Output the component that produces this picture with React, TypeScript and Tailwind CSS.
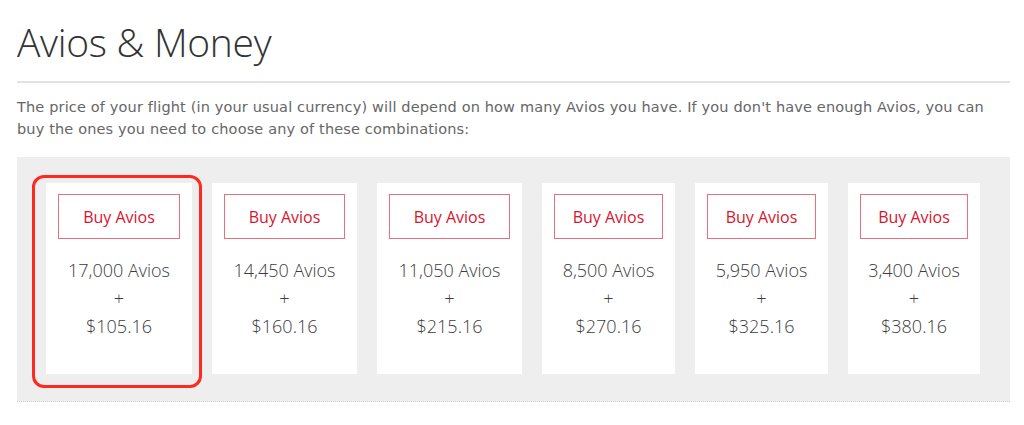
import React from "react";

const options = [
  { avios: "17,000", money: "$105.16", w: "w-[146px]", hl: true },
  { avios: "14,450", money: "$160.16", w: "w-[145px]" },
  { avios: "11,050", money: "$215.16", w: "w-[145px]" },
  { avios: "8,500", money: "$270.16", w: "w-[133px]" },
  { avios: "5,950", money: "$325.16", w: "w-[133px]" },
  { avios: "3,400", money: "$380.16", w: "w-[132px]" },
];

export default function App() {
  return (
    <div className="w-[1024px] h-[425px] bg-white overflow-hidden px-[17px] pt-[20px]">
      <div className="w-[993px]">
        <h1
          className="text-[39px] leading-[44px] font-light text-[#333333] tracking-[-0.3px]"
          style={{ fontFamily: '"Open Sans", sans-serif' }}
        >
          Avios &amp; Money
        </h1>
        <div className="mt-[17px] h-[2px] bg-[#e2e2e2]" />
        <p
          className="mt-[13px] text-[14.5px] leading-[22px] text-[#666666] tracking-[0.15px]"
          style={{ fontFamily: '"DejaVu Sans", Verdana, sans-serif' }}
        >
          The price of your flight (in your usual currency) will depend on how many Avios you have. If you don't have enough Avios, you can buy the ones you need to choose any of these combinations:
        </p>
        <div className="mt-[17px] bg-[#eeeeee] border-b border-dotted border-[#cfcfcf] pl-[29px] pt-[26px] pb-[27px] flex gap-[20px]">
          {options.map((o, i) => (
            <div key={i} className={`relative ${o.w} h-[191px] bg-white px-[12px] pt-[11px]`}>
              {o.hl && (
                <div className="absolute left-[-14px] top-[-8px] right-[-10px] bottom-[-14px] border-[3px] border-[#ff2a1f] rounded-[12px]" />
              )}
              <div
                className="h-[45px] border border-[#e6717d] flex items-center justify-center text-[16px] text-[#d8152e]"
                style={{ fontFamily: '"Open Sans", sans-serif' }}
              >
                Buy Avios
              </div>
              <div
                className="mt-[17px] text-center text-[18px] leading-[28px] text-[#3c3c3c] font-light"
                style={{ fontFamily: '"Open Sans", sans-serif' }}
              >
                <div className="whitespace-nowrap">{o.avios} Avios</div>
                <div>+</div>
                <div>{o.money}</div>
              </div>
            </div>
          ))}
        </div>
      </div>
    </div>
  );
}
